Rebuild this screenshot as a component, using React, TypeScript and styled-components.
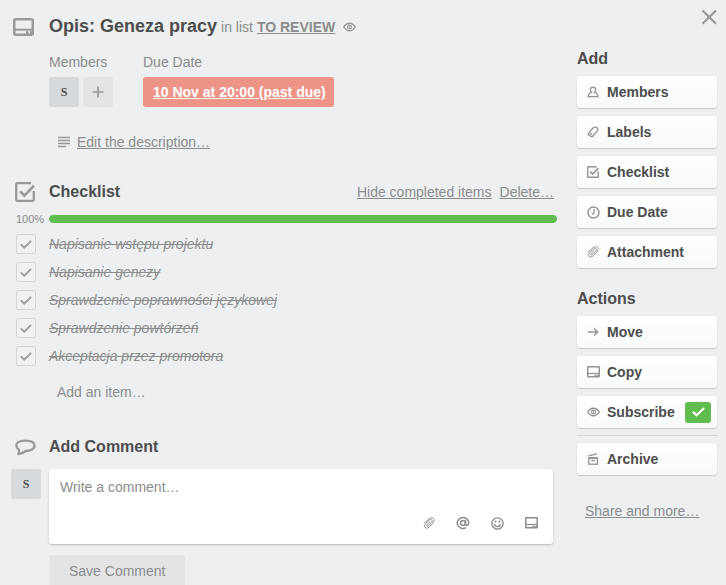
import React, { useState } from "react";
import styled, { createGlobalStyle } from "styled-components";

const GlobalStyle = createGlobalStyle`
  *, *::before, *::after { box-sizing: border-box; }
  html { background: #edeff0; scrollbar-width: none; }
  body {
    margin: 0;
    background: #edeff0;
    color: #4d4d4d;
    font: 14px/20px "Liberation Sans", Arial, sans-serif;
  }
  h1, h2, h3, p, ul { margin: 0; padding: 0; }
  button, input, textarea { font: inherit; color: inherit; margin: 0; }
  button { cursor: pointer; }
  svg { display: block; flex: none; }
`;

const Dialog = styled.div`
  display: grid;
  grid-template-columns: minmax(0, 1fr) 140px;
  column-gap: 20px;
  padding: 0 9px 0 11px;
`;

const Main = styled.main`
  padding-top: 14px;
`;

const Sidebar = styled.aside`
  display: flex;
  flex-direction: column;
  padding-top: 10px;
`;

const Row = styled.div`
  display: grid;
  grid-template-columns: 38px minmax(0, 1fr);
  align-items: center;
`;

const Gutter = styled.div<{ $inset?: number }>`
  display: flex;
  padding-left: ${(p) => p.$inset ?? 0}px;
  color: #999;
`;

const TitleLine = styled.div`
  display: flex;
  align-items: baseline;
  line-height: 24px;
  color: #8c8c8c;
`;

const Title = styled.h1`
  font-size: 18px;
  line-height: 24px;
  font-weight: bold;
  color: #4d4d4d;
  margin-right: 4px;
`;

const TextLink = styled.a<{ $strong?: boolean }>`
  color: #8c8c8c;
  font-weight: ${(p) => (p.$strong ? "bold" : "normal")};
  text-decoration: underline;
`;

const Watching = styled.span`
  align-self: center;
  margin-left: 8px;
  color: #999;
`;

const Details = styled.div`
  display: flex;
  gap: 30px;
  margin: 13px 0 0 38px;
`;

const DetailLabel = styled.h3`
  margin-bottom: 5px;
  font-size: 14px;
  line-height: 20px;
  font-weight: normal;
  color: #8c8c8c;
`;

const Tiles = styled.div`
  display: flex;
  gap: 4px;
`;

const Avatar = styled.button`
  width: 30px;
  height: 30px;
  padding: 0;
  border: 0;
  border-radius: 3px;
  background: #d6dadc;
  color: #4d4d4d;
  font: bold 12px/30px "Liberation Serif", serif;
`;

const AddTile = styled.button`
  display: grid;
  place-items: center;
  width: 30px;
  height: 30px;
  padding: 0;
  border: 0;
  border-radius: 3px;
  background: #e2e4e6;
  color: #999;
`;

const DueBadge = styled.a`
  display: block;
  padding: 0 8px 0 10px;
  border-radius: 3px;
  background: #ee9487;
  color: #fff;
  font-weight: bold;
  line-height: 30px;
`;

const Description = styled.div`
  display: flex;
  align-items: center;
  gap: 6px;
  margin: 25px 0 0 47px;
  color: #999;
`;

const ChecklistSection = styled.section`
  margin-top: 30px;
`;

const SectionTitle = styled.h2`
  font-size: 16px;
  line-height: 20px;
  font-weight: bold;
  color: #4d4d4d;
`;

const SectionHead = styled.div`
  display: flex;
  justify-content: space-between;
  align-items: center;
`;

const HeadLinks = styled.div`
  display: flex;
  gap: 8px;
  padding-right: 3px;
`;

const ProgressRow = styled(Row)`
  margin-top: 11px;
`;

const Percent = styled.span`
  padding-left: 5px;
  font-size: 11px;
  line-height: 12px;
  color: #8c8c8c;
`;

const Track = styled.div`
  height: 8px;
  border-radius: 4px;
  overflow: hidden;
  background: #d6dadc;
`;

const Bar = styled.div`
  height: 8px;
  border-radius: 4px;
  background: #61bd4f;
`;

const Items = styled.ul`
  margin-top: 5px;
  list-style: none;
`;

const Item = styled.li`
  display: grid;
  grid-template-columns: 38px minmax(0, 1fr);
  align-items: center;
  height: 28px;
`;

const CheckCell = styled.span`
  display: grid;
  place-items: center;
  width: 20px;
  height: 20px;
  margin-left: 5px;
  color: #999;

  & > * { grid-area: 1 / 1; }
  & > svg { pointer-events: none; }
`;

const CheckInput = styled.input`
  appearance: none;
  width: 20px;
  height: 20px;
  border: 1px solid #d2d5d7;
  border-radius: 2px;
  background: #f0f1f2;
`;

const ItemLabel = styled.label<{ $done: boolean }>`
  color: ${(p) => (p.$done ? "#8c8c8c" : "#4d4d4d")};
  font-style: ${(p) => (p.$done ? "italic" : "normal")};
  text-decoration: ${(p) => (p.$done ? "line-through" : "none")};
`;

const AddItem = styled.button`
  display: block;
  margin: 12px 0 0 38px;
  padding: 0 8px;
  border: 0;
  background: none;
  color: #8c8c8c;
  line-height: 20px;
`;

const CommentSection = styled.section`
  margin-top: 35px;
`;

const CommentRow = styled(Row)`
  align-items: start;
  margin-top: 12px;
  padding-right: 4px;
`;

const Editor = styled.div`
  border-radius: 3px;
  background: #fff;
  box-shadow: 0 1px 2px #b6bbbf;
`;

const CommentInput = styled.textarea`
  display: block;
  width: 100%;
  height: 40px;
  padding: 8px 11px;
  border: 0;
  outline: 0;
  resize: none;
  background: transparent;
  line-height: 20px;

  &::placeholder { color: #8c8c8c; opacity: 1; }
`;

const EditorTools = styled.div`
  display: flex;
  justify-content: flex-end;
  gap: 14px;
  padding: 4px 12px 11px 0;
`;

const ToolButton = styled.button`
  display: grid;
  place-items: center;
  width: 20px;
  height: 20px;
  padding: 0;
  border: 0;
  background: none;
  color: #8c8c8c;
`;

const SaveButton = styled.button`
  display: block;
  height: 32px;
  margin: 11px 0 0 38px;
  padding: 0 20px;
  border: 0;
  border-radius: 3px;
  background: #e2e4e6;
  color: #8c8c8c;
`;

const CloseButton = styled.button`
  align-self: flex-end;
  padding: 0;
  border: 0;
  background: none;
  color: #999;
`;

const SideTitle = styled(SectionTitle)<{ $gap: number }>`
  margin: ${(p) => p.$gap}px 0 7px;
`;

const SideList = styled.div`
  display: flex;
  flex-direction: column;
  gap: 8px;
`;

const SideButton = styled.button`
  display: flex;
  align-items: center;
  width: 100%;
  height: 32px;
  padding: 0 6px 0 8px;
  border: 0;
  border-radius: 3px;
  background: linear-gradient(to bottom, #fff, #f8f9f9);
  box-shadow: 0 0 1px #c9cdd0, 0 1px 1px #c4c9cc;
  color: #4d4d4d;
  font-weight: bold;
  text-align: left;
`;

const SideIcon = styled.span`
  display: grid;
  place-items: center;
  width: 16px;
  margin-right: 6px;
  color: #939393;
`;

const OnBadge = styled.span`
  display: grid;
  place-items: center;
  width: 26px;
  height: 21px;
  margin-left: auto;
  border-radius: 3px;
  background: #61bd4f;
  color: #fff;
`;

const Divider = styled.hr`
  width: 100%;
  height: 1px;
  margin: 7px 0;
  border: 0;
  background: #d2d5d7;
`;

const ShareLink = styled(TextLink)`
  margin: 26px 0 0 8px;
`;

const CardIcon = ({ size = 12 }: { size?: number }) =>
  size > 16 ? (
    <svg width="21" height="18" viewBox="0 0 21 18" fill="none" stroke="currentColor" aria-hidden="true">
      <rect x="1.25" y="1.25" width="18.5" height="15.5" rx="1.5" strokeWidth="2.5" />
      <path d="M1 11.7h19" strokeWidth="2" />
      <path d="M13 14.5h2.5M17 14.5h2" strokeWidth="2.5" />
    </svg>
  ) : (
    <svg width="13" height="12" viewBox="0 0 13 12" fill="none" stroke="currentColor" aria-hidden="true">
      <rect x="0.75" y="0.75" width="11.5" height="10" rx="0.5" strokeWidth="1.5" />
      <path d="M1 7.5h11" strokeWidth="1.2" />
      <path d="M7.5 9.5h2M10.2 9.5h1.5" strokeWidth="1.4" />
    </svg>
  );

const EyeIcon = () => (
  <svg width="13" height="10" viewBox="0 0 13 10" fill="none" stroke="currentColor" aria-hidden="true">
    <path d="M0.8 5C2.4 2.3 4.3 1.2 6.5 1.2S10.6 2.3 12.2 5C10.6 7.7 8.7 8.8 6.5 8.8S2.4 7.7 0.8 5Z" strokeWidth="1.4" />
    <circle cx="6.5" cy="5" r="1.9" strokeWidth="1.2" />
    <circle cx="6.5" cy="5" r="0.7" fill="currentColor" stroke="none" />
  </svg>
);

const CheckBoxIcon = ({ size }: { size: number }) => (
  <svg width={size} height={size} viewBox="0 0 20 20" fill="none" stroke="currentColor" strokeWidth="2.3" aria-hidden="true">
    <path d="M16 1.2H2.2Q1.2 1.2 1.2 2.2v15.6q0 1 1 1h15.6q1 0 1-1V9" />
    <path d="M5.2 9.4l4.2 4.2L19 3.6" strokeWidth="2.6" />
  </svg>
);

const CheckMark = ({ width = 12, weight = 2 }: { width?: number; weight?: number }) => (
  <svg width={width} height={(width * 3) / 4} viewBox="0 0 12 9" fill="none" stroke="currentColor" strokeWidth={weight} aria-hidden="true">
    <path d="M0.8 4.3l3.4 3.4L11.2 0.9" />
  </svg>
);

const ClipIcon = () => (
  <svg width="12" height="12" viewBox="0 0 12 12" fill="none" stroke="currentColor" strokeWidth="1" strokeLinecap="round" aria-hidden="true">
    <path d="M1 6.2L5.6 2.1C7.2 0.7 9.3 0.3 10.5 1.5C11.7 2.8 11.2 4.6 9.8 6.2L6.2 9.9C4.9 11.2 3.1 11.6 2.1 10.5C1.1 9.4 1.5 7.8 2.7 6.5L5.9 3.4C6.9 2.4 8.1 2.2 8.8 2.9C9.5 3.7 9.1 4.8 8.3 5.7L5.2 8.7C4.7 9.2 4 9.2 3.8 8.8C3.5 8.4 3.7 7.9 4.2 7.4L6.9 4.7" />
  </svg>
);

const MemberIcon = () => (
  <svg width="12" height="12" viewBox="0 0 12 12" fill="none" stroke="currentColor" strokeWidth="1.3" aria-hidden="true">
    <path d="M4.5 6.3C3.6 5.6 3.4 4.7 3.4 3.7C3.4 2.1 4.4 1.1 6 1.1S8.6 2.1 8.6 3.7C8.6 4.7 8.4 5.6 7.5 6.3C9.8 6.9 10.9 8.2 10.9 10.6H1.1C1.1 8.2 2.2 6.9 4.5 6.3Z" />
  </svg>
);

const LabelIcon = () => (
  <svg width="12" height="12" viewBox="0 0 12 12" fill="none" stroke="currentColor" strokeWidth="1.3" strokeLinejoin="round" aria-hidden="true">
    <path d="M6.3 1.7L8.9 1.2Q9.5 1.1 9.9 1.6L10.9 3.3Q11.2 3.9 10.8 4.4L5.7 10.2Q5.1 10.9 4.3 10.6L1.9 9.3Q1 8.6 1.5 7.5Z" />
    <circle cx="4" cy="8.1" r="0.7" strokeWidth="1" />
  </svg>
);

const ClockIcon = () => (
  <svg width="13" height="13" viewBox="0 0 13 13" fill="none" stroke="currentColor" strokeWidth="1.4" aria-hidden="true">
    <circle cx="6.5" cy="6.5" r="5.5" />
    <path d="M7 3v4L4.8 8.5" strokeWidth="1.3" />
  </svg>
);

const ArrowIcon = () => (
  <svg width="12" height="10" viewBox="0 0 12 10" fill="none" stroke="currentColor" strokeWidth="1.5" aria-hidden="true">
    <path d="M1 5h9.5M7 1.5L10.6 5L7 8.5" />
  </svg>
);

const ArchiveIcon = () => (
  <svg width="12" height="12" viewBox="0 0 12 12" fill="none" stroke="currentColor" strokeWidth="1.3" aria-hidden="true">
    <path d="M1.3 2.9L10 0.9" />
    <rect x="1.8" y="4.7" width="8.6" height="6.5" />
    <path d="M1.8 5.2h8.6" strokeWidth="1.8" />
    <path d="M4.3 7.7h3.6" />
  </svg>
);

const AtIcon = () => (
  <svg width="14" height="14" viewBox="0 0 14 14" fill="none" stroke="currentColor" strokeWidth="1.5" aria-hidden="true">
    <circle cx="7" cy="7" r="2.4" />
    <path d="M9.5 4.3V8.1Q9.6 9.5 10.9 9.4Q12.7 9 12.7 6.8A5.7 5.5 0 1 0 10 11.7" />
  </svg>
);

const SmileIcon = () => (
  <svg width="13" height="13" viewBox="0 0 13 13" fill="none" stroke="currentColor" strokeWidth="1.4" aria-hidden="true">
    <circle cx="6.5" cy="6.5" r="5.6" />
    <path d="M4.7 3.5v2M8.3 3.5v2" />
    <path d="M3.5 7.2Q3.8 9.6 6.5 9.6T9.5 7.2" />
  </svg>
);

const SpeechIcon = () => (
  <svg width="21" height="17" viewBox="0 0 21 17" fill="none" stroke="currentColor" strokeWidth="2.3" strokeLinejoin="round" aria-hidden="true">
    <path d="M3.8 10.4C2.1 9.4 1.3 8.1 1.3 6.6C1.3 3.6 5 1.7 10.5 1.7C16.2 1.7 19.5 3.7 19.5 6.7C19.5 9.9 15.5 12 10.7 12C8.7 13.7 6.5 14.9 3.3 15.2C4.3 13.7 4.2 12 3.8 10.4Z" />
  </svg>
);

const LinesIcon = () => (
  <svg width="13" height="12" viewBox="0 0 13 12" fill="none" stroke="currentColor" strokeWidth="1.6" aria-hidden="true">
    <path d="M0 1.5h12M0 4.5h12M0 7.5h12M0 10.5h8" />
  </svg>
);

const PlusIcon = () => (
  <svg width="12" height="12" viewBox="0 0 12 12" fill="none" stroke="currentColor" strokeWidth="1.7" aria-hidden="true">
    <path d="M6 0.5v11M0.5 6h11" />
  </svg>
);

const CloseIcon = () => (
  <svg width="16" height="16" viewBox="0 0 16 16" fill="none" stroke="currentColor" strokeWidth="2.2" aria-hidden="true">
    <path d="M1.5 0.5L15 13.8M15 0.5L1.5 13.8" />
  </svg>
);

const tasks = [
  "Napisanie wstępu projektu",
  "Napisanie genezy",
  "Sprawdzenie poprawności językowej",
  "Sprawdzenie powtórzeń",
  "Akceptacja przez promotora",
];

const addActions = [
  { label: "Members", icon: <MemberIcon /> },
  { label: "Labels", icon: <LabelIcon /> },
  { label: "Checklist", icon: <CheckBoxIcon size={12} /> },
  { label: "Due Date", icon: <ClockIcon /> },
  { label: "Attachment", icon: <ClipIcon /> },
];

const commentTools = [
  { label: "Add attachment", icon: <ClipIcon /> },
  { label: "Mention a member", icon: <AtIcon /> },
  { label: "Add emoji", icon: <SmileIcon /> },
  { label: "Add card", icon: <CardIcon /> },
];

type SideActionProps = { label: string; icon: React.ReactNode; on?: boolean; onClick?: () => void };

const SideAction = ({ label, icon, on, onClick }: SideActionProps) => (
  <SideButton type="button" onClick={onClick} aria-pressed={on}>
    <SideIcon>{icon}</SideIcon>
    {label}
    {on && (
      <OnBadge>
        <CheckMark width={13} />
      </OnBadge>
    )}
  </SideButton>
);

export default function App() {
  const [done, setDone] = useState<boolean[]>(() => tasks.map(() => true));
  const [subscribed, setSubscribed] = useState(true);
  const percent = Math.round((done.filter(Boolean).length / tasks.length) * 100);

  const toggle = (index: number) => setDone((all) => all.map((value, i) => (i === index ? !value : value)));

  return (
    <>
      <GlobalStyle />
      <Dialog role="dialog" aria-labelledby="card-title">
        <Main>
          <Row>
            <Gutter $inset={2}>
              <CardIcon size={21} />
            </Gutter>
            <TitleLine>
              <Title id="card-title">Opis: Geneza pracy</Title>
              <span>
                in list{" "}
                <TextLink href="#list" $strong>
                  TO REVIEW
                </TextLink>
              </span>
              <Watching>
                <EyeIcon />
              </Watching>
            </TitleLine>
          </Row>

          <Details>
            <div>
              <DetailLabel>Members</DetailLabel>
              <Tiles>
                <Avatar type="button">S</Avatar>
                <AddTile type="button" aria-label="Add member">
                  <PlusIcon />
                </AddTile>
              </Tiles>
            </div>
            <div>
              <DetailLabel>Due Date</DetailLabel>
              <DueBadge href="#due">10 Nov at 20:00 (past due)</DueBadge>
            </div>
          </Details>

          <Description>
            <LinesIcon />
            <TextLink href="#description">Edit the description…</TextLink>
          </Description>

          <ChecklistSection>
            <Row>
              <Gutter $inset={4}>
                <CheckBoxIcon size={20} />
              </Gutter>
              <SectionHead>
                <SectionTitle>Checklist</SectionTitle>
                <HeadLinks>
                  <TextLink href="#hide">Hide completed items</TextLink>
                  <TextLink href="#delete">Delete…</TextLink>
                </HeadLinks>
              </SectionHead>
            </Row>
            <ProgressRow>
              <Percent>{percent}%</Percent>
              <Track>
                <Bar style={{ width: `${percent}%` }} />
              </Track>
            </ProgressRow>
            <Items>
              {tasks.map((task, i) => (
                <Item key={task}>
                  <CheckCell>
                    <CheckInput id={`task-${i}`} type="checkbox" checked={done[i]} onChange={() => toggle(i)} />
                    {done[i] && <CheckMark weight={1.7} />}
                  </CheckCell>
                  <ItemLabel htmlFor={`task-${i}`} $done={done[i]}>
                    {task}
                  </ItemLabel>
                </Item>
              ))}
            </Items>
            <AddItem type="button">Add an item…</AddItem>
          </ChecklistSection>

          <CommentSection>
            <Row>
              <Gutter $inset={4}>
                <SpeechIcon />
              </Gutter>
              <SectionTitle>Add Comment</SectionTitle>
            </Row>
            <CommentRow>
              <Avatar type="button">S</Avatar>
              <Editor>
                <CommentInput aria-label="Comment" placeholder="Write a comment…" />
                <EditorTools>
                  {commentTools.map((tool) => (
                    <ToolButton key={tool.label} type="button" aria-label={tool.label}>
                      {tool.icon}
                    </ToolButton>
                  ))}
                </EditorTools>
              </Editor>
            </CommentRow>
            <SaveButton type="button">Save Comment</SaveButton>
          </CommentSection>
        </Main>

        <Sidebar>
          <CloseButton type="button" aria-label="Close">
            <CloseIcon />
          </CloseButton>
          <SideTitle $gap={23}>Add</SideTitle>
          <SideList>
            {addActions.map((action) => (
              <SideAction key={action.label} {...action} />
            ))}
          </SideList>
          <SideTitle $gap={21}>Actions</SideTitle>
          <SideList>
            <SideAction label="Move" icon={<ArrowIcon />} />
            <SideAction label="Copy" icon={<CardIcon />} />
            <SideAction label="Subscribe" icon={<EyeIcon />} on={subscribed} onClick={() => setSubscribed(!subscribed)} />
          </SideList>
          <Divider />
          <SideAction label="Archive" icon={<ArchiveIcon />} />
          <ShareLink href="#share">Share and more…</ShareLink>
        </Sidebar>
      </Dialog>
    </>
  );
}
